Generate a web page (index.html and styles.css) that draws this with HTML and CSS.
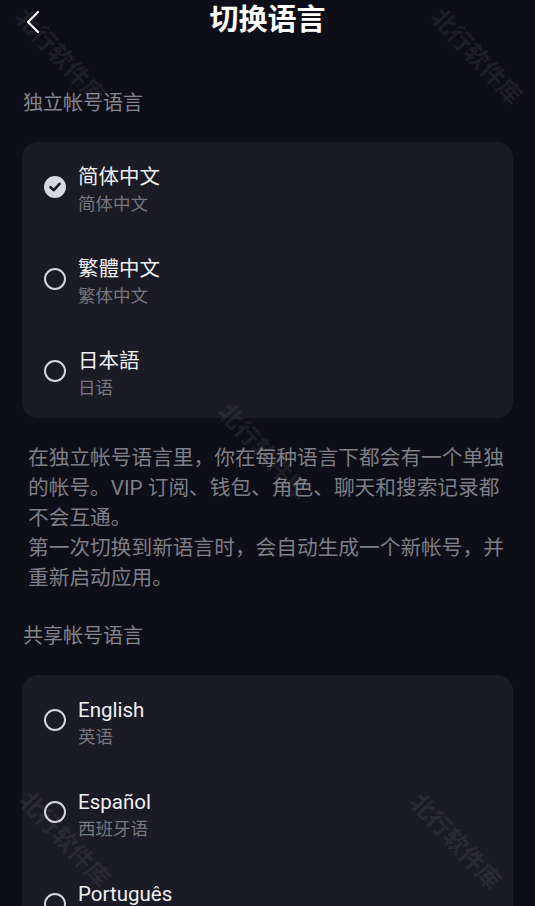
FILE: index.html
```html
<!DOCTYPE html>
<html lang="zh-CN">
<head>
    <meta charset="UTF-8">
    <meta name="viewport" content="width=device-width, initial-scale=1.0">
    <title>切换语言</title>
    <link rel="stylesheet" href="styles.css">
</head>
<body>

<div class="page">
    <header class="top-bar">
        <span class="back">
            <svg width="14" height="24" viewBox="0 0 14 24"><path d="M12 2 L2 12 L12 22" fill="none" stroke="#fff" stroke-width="2.2" stroke-linecap="round" stroke-linejoin="round"/></svg>
        </span>
        <h1>切换语言</h1>
    </header>

    <h2 class="section-label first">独立帐号语言</h2>
    <div class="card">
        <div class="lang-row">
            <span class="radio checked">
                <svg width="14" height="14" viewBox="0 0 14 14"><path d="M2.5 7.2 L5.8 10.2 L11.5 3.8" fill="none" stroke="#1b1b25" stroke-width="2.6" stroke-linecap="round" stroke-linejoin="round"/></svg>
            </span>
            <div class="lang-text">
                <div class="lang-name">简体中文</div>
                <div class="lang-sub">简体中文</div>
            </div>
        </div>
        <div class="lang-row">
            <span class="radio"></span>
            <div class="lang-text">
                <div class="lang-name">繁體中文</div>
                <div class="lang-sub">繁体中文</div>
            </div>
        </div>
        <div class="lang-row">
            <span class="radio"></span>
            <div class="lang-text">
                <div class="lang-name">日本語</div>
                <div class="lang-sub">日语</div>
            </div>
        </div>
    </div>

    <p class="note">在独立帐号语言里，你在每种语言下都会有一个单独的帐号。VIP 订阅、钱包、角色、聊天和搜索记录都不会互通。<br>第一次切换到新语言时，会自动生成一个新帐号，并重新启动应用。</p>

    <h2 class="section-label">共享帐号语言</h2>
    <div class="card">
        <div class="lang-row">
            <span class="radio"></span>
            <div class="lang-text">
                <div class="lang-name">English</div>
                <div class="lang-sub">英语</div>
            </div>
        </div>
        <div class="lang-row">
            <span class="radio"></span>
            <div class="lang-text">
                <div class="lang-name">Español</div>
                <div class="lang-sub">西班牙语</div>
            </div>
        </div>
        <div class="lang-row">
            <span class="radio"></span>
            <div class="lang-text">
                <div class="lang-name">Português</div>
                <div class="lang-sub">葡萄牙语</div>
            </div>
        </div>
    </div>

    <span class="watermark wm-1">北行软件库</span>
    <span class="watermark wm-2">北行软件库</span>
    <span class="watermark wm-3">北行软件库</span>
    <span class="watermark wm-4">北行软件库</span>
    <span class="watermark wm-5">北行软件库</span>
</div>

</body>
</html>
```

FILE: styles.css
```css
* {
    margin: 0;
    padding: 0;
    box-sizing: border-box;
}
html, body {
    background-color: #0e0e18;
    height: 100%;
    overflow: hidden;
}
body {
    font-family: 'Roboto', 'Noto Sans CJK SC', sans-serif;
    color: #f0f0f2;
}
.page {
    position: relative;
    min-height: 906px;
    padding: 0 22px;
}
.top-bar {
    position: relative;
    height: 42px;
    display: flex;
    align-items: center;
    justify-content: center;
}
.top-bar h1 {
    font-size: 29px;
    font-weight: 700;
    color: #fff;
    line-height: 40px;
    margin-top: -2px;
}
.back {
    position: absolute;
    left: 4px;
    top: 10px;
    display: flex;
}
.section-label {
    font-size: 20px;
    font-weight: 400;
    color: #85858d;
    line-height: 28px;
    padding-left: 1px;
    margin-bottom: 25px;
}
.section-label.first {
    margin-top: 47px;
}
.card {
    background-color: #1b1b25;
    border-radius: 16px;
}
.lang-row {
    height: 92px;
    display: flex;
    align-items: center;
    padding-left: 22px;
    padding-top: 4px;
    gap: 12px;
}
.radio {
    width: 22px;
    height: 22px;
    border: 2px solid #d4d4dc;
    border-radius: 50%;
    margin-top: -6px;
    display: flex;
    align-items: center;
    justify-content: center;
}
.radio.checked {
    background-color: #d8d8e0;
    border-color: #d8d8e0;
}
.lang-name {
    font-size: 20.5px;
    line-height: 28px;
    color: #f0f0f2;
}
.lang-sub {
    font-size: 17.5px;
    line-height: 26px;
    color: #76767e;
}
.note {
    font-size: 20.7px;
    line-height: 30px;
    color: #7e7e86;
    padding: 25px 0 29px 6px;
    margin-right: -1px;
}
.watermark {
    position: absolute;
    font-family: 'Noto Sans CJK SC', sans-serif;
    font-size: 24px;
    font-weight: 700;
    color: rgba(255, 255, 255, 0.08);
    transform: translate(-50%, -50%) rotate(47deg);
    white-space: nowrap;
    pointer-events: none;
}
.wm-1 { left: 62px; top: 55px; }
.wm-2 { left: 478px; top: 55px; }
.wm-3 { left: 265px; top: 450px; }
.wm-4 { left: 66px; top: 838px; }
.wm-5 { left: 457px; top: 840px; }
```
